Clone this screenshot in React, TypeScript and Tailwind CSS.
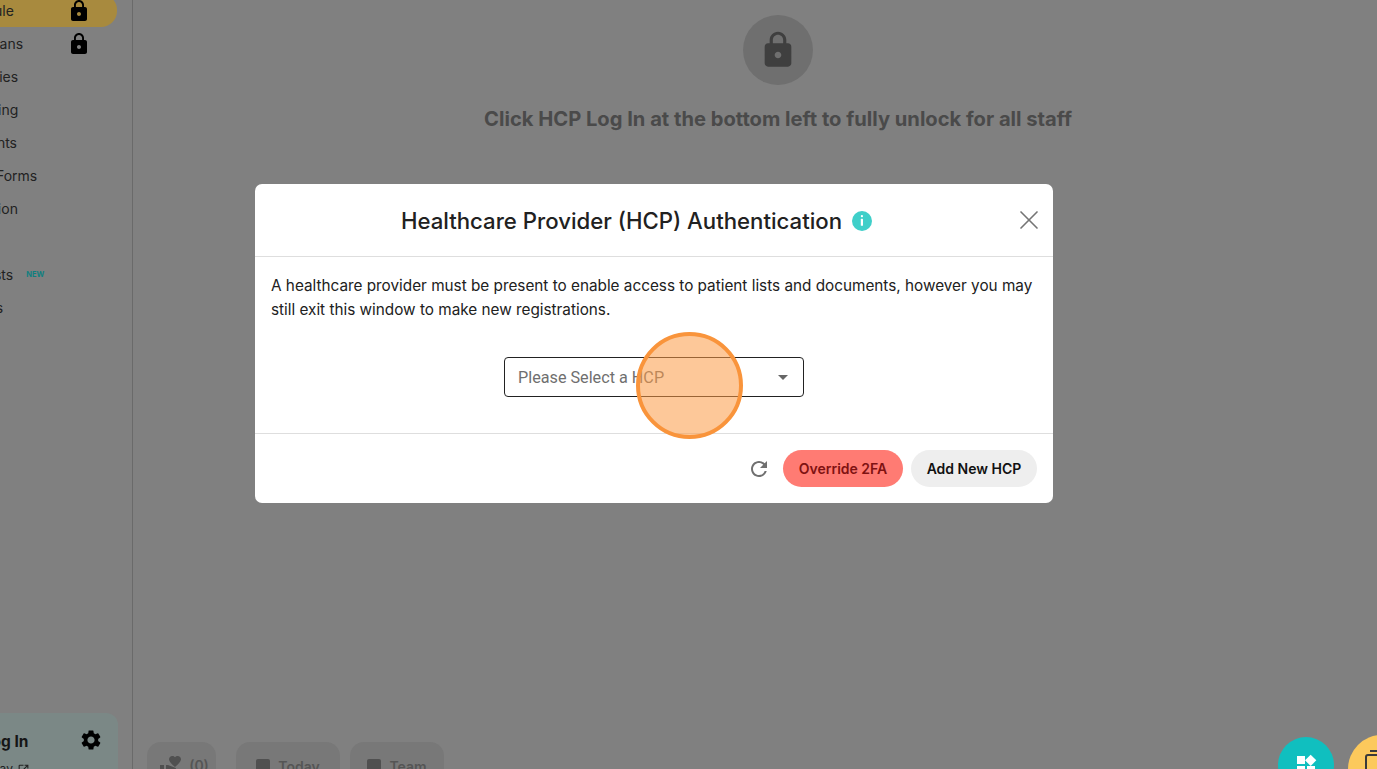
import { MdLock, MdSettings, MdRefresh, MdWidgets, MdVolunteerActivism, MdOpenInNew } from 'react-icons/md';
import { X } from 'lucide-react';

const navItems = [
  { label: 'Schedule', locked: true, active: true },
  { label: 'Care Plans', locked: true },
  { label: 'Therapies' },
  { label: 'Marketing' },
  { label: 'Payments' },
  { label: 'Intake Forms' },
  { label: 'Education' },
  { label: '' },
  { label: 'Requests', isNew: true },
  { label: 'Reports' },
];

function NavRow({ label, locked, active, isNew }: { label: string; locked?: boolean; active?: boolean; isNew?: boolean }) {
  return (
    <div className={`flex h-[33px] items-center rounded-r-[16px] ${active ? 'bg-[#a88a3e]' : ''}`}>
      <span className="whitespace-nowrap pl-[4px] text-[14px] text-[#222]">{label}</span>
      {isNew && <span className="ml-[13px] text-[7.5px] font-bold text-[#0f7f7f]">NEW</span>}
      {locked && <MdLock className="absolute left-[119px] h-[24px] w-[24px] text-black" />}
    </div>
  );
}

function BottomTab({ label, width, mr }: { label: string; width: string; mr: string }) {
  return (
    <div className={`flex h-[40px] items-start justify-center gap-[8px] rounded-[14px] bg-[#787878] pt-[16px] ${width} ${mr}`}>
      <div className="mt-[1px] h-[14px] w-[14px] rounded-[2px] bg-[#505050]" />
      <span className="text-[14px] font-semibold leading-[18px] text-[#555]">{label}</span>
    </div>
  );
}

export default function App() {
  return (
    <div className="relative flex h-[769px] w-[1377px] overflow-hidden bg-[#808080] font-['Inter',sans-serif]">
      {/* sidebar, scrolled so its left edge is off screen */}
      <aside className="relative flex h-full w-[133px] shrink-0 flex-col border-r border-[#6a6a6a]">
        <nav className="relative -ml-[52px] mr-[15px] -mt-[6px] flex flex-col">
          {navItems.map((item, i) => (
            <div key={i} className="relative">
              <NavRow {...item} />
            </div>
          ))}
        </nav>
        <div className="mr-[14px] mt-auto -mb-[30px] -ml-[20px] h-[86px] rounded-[12px] bg-[#7b8886]">
          <div className="flex items-start justify-between pr-[15px] pt-[15px]">
            <span className="-ml-[34px] mt-[2px] whitespace-nowrap text-[15.5px] leading-[24px] font-bold text-[#151515]">HCP Log In</span>
            <MdSettings className="h-[24px] w-[24px] text-black" />
          </div>
          <div className="-ml-[25px] mt-[6px] flex items-center gap-[4px] whitespace-nowrap text-[12px] text-[#222]">
            Get Today <MdOpenInNew className="h-[13px] w-[13px]" />
          </div>
        </div>
      </aside>

      {/* main area, wider than the window */}
      <main className="flex h-full w-[1290px] shrink-0 flex-col items-center">
        <div className="mt-[15px] flex h-[70px] w-[70px] items-center justify-center rounded-full bg-[#6f6f6f]">
          <MdLock className="h-[40px] w-[40px] text-[#3f3f3f]" />
        </div>
        <h1 className="mt-[20px] text-[20.15px] font-bold leading-[28px] text-[#4a4a4a]">
          Click HCP Log In at the bottom left to fully unlock for all staff
        </h1>
        <div className="mt-auto -mb-[13px] flex w-full pl-[14px]">
          <div className="mr-[20px] flex h-[40px] w-[69px] items-start justify-center gap-[6px] rounded-[14px] bg-[#787878] pl-[5px] pt-[12px]">
            <MdVolunteerActivism className="h-[24px] w-[24px] text-[#505050]" />
            <span className="mt-[3px] text-[14px] font-semibold leading-[18px] text-[#555]">(0)</span>
          </div>
          <BottomTab label="Today" width="w-[104px]" mr="mr-[10px]" />
          <BottomTab label="Team" width="w-[94px]" mr="mr-[0px]" />
        </div>
      </main>

      {/* floating buttons */}
      <div className="absolute left-[1278px] top-[737px] flex h-[56px] w-[56px] items-start justify-center rounded-full bg-[#10bfbf] pt-[16px]">
        <MdWidgets className="h-[24px] w-[24px] text-white" />
      </div>
      <div className="absolute left-[1348px] top-[735px] flex h-[68px] w-[68px] items-start rounded-full bg-[#fcc95c] pl-[16px] pt-[14px]">
        <svg width="26" height="26" viewBox="0 0 26 26" fill="none" stroke="#3a3a3a" strokeWidth="2">
          <path d="M6 2h18" />
          <rect x="2" y="6" width="22" height="18" rx="2" />
        </svg>
      </div>

      {/* modal */}
      <div className="absolute left-[255px] top-[184px] flex h-[319px] w-[798px] flex-col rounded-[7px] bg-white">
        <header className="relative flex h-[73px] shrink-0 items-center justify-center border-b border-[#dedede] pr-[35px] pt-[1px]">
          <h2 className="text-[22.2px] font-medium leading-[28px] text-[#212121]">Healthcare Provider (HCP) Authentication</h2>
          <span className="ml-[10px] flex h-[20px] w-[20px] items-center justify-center rounded-full bg-[#3fcfc9] leading-none">
            <svg width="4" height="11" viewBox="0 0 4 11" fill="white">
              <rect x="0.8" y="0" width="2.2" height="2.2" rx="1" />
              <rect x="0.8" y="3.8" width="2.2" height="7" rx="0.6" />
            </svg>
          </span>
          <button className="absolute right-[8px] top-[20px] text-[#757575]">
            <X className="h-[32px] w-[32px]" strokeWidth={1.25} />
          </button>
        </header>
        <div className="flex flex-1 flex-col px-[16px] pt-[17px]">
          <p className="text-[15.3px] leading-[24px] text-[#212121]">
            A healthcare provider must be present to enable access to patient lists and documents, however you may still exit this window to make new registrations.
          </p>
          <div className="mx-auto mt-[35px] flex h-[40px] w-[300px] items-center justify-between rounded-[4px] border border-[#222] pl-[13px] pr-[15px] font-['Roboto',sans-serif] text-[16.2px] text-[#6f6f6f]">
            <span className="pt-[2px]">Please Select a HCP</span>
            <span className="h-0 w-0 border-x-[5px] border-t-[5px] border-x-transparent border-t-[#666]" />
          </div>
        </div>
        <footer className="flex h-[70px] shrink-0 items-center justify-end gap-[8px] border-t border-[#dedede] pr-[16px]">
          <MdRefresh className="mr-[4px] h-[24px] w-[24px] text-[#707070]" />
          <button className="h-[37px] w-[120px] rounded-full bg-[#ff7b73] text-[14px] font-semibold text-[#7f1212]">Override 2FA</button>
          <button className="h-[37px] w-[126px] rounded-full bg-[#eeeeee] text-[14px] font-semibold text-[#111]">Add New HCP</button>
        </footer>
      </div>

      {/* click marker */}
      <div className="absolute left-[636px] top-[332px] h-[107px] w-[107px] rounded-full border-[4px] border-[#f9943b] bg-[#fb9a45]/55" />
    </div>
  );
}
